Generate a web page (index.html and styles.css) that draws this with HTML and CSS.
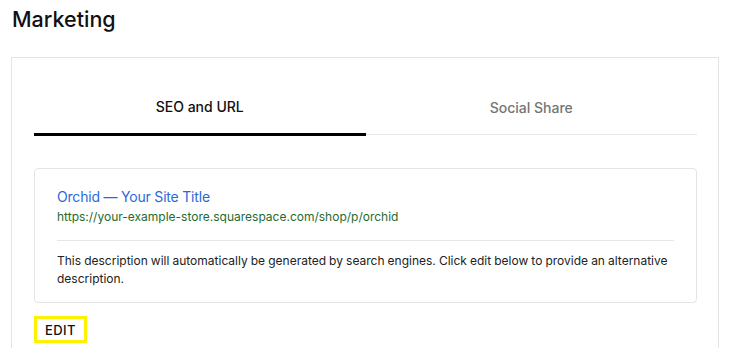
FILE: index.html
```html
<!DOCTYPE html>
<html lang="en">
<head>
    <meta charset="UTF-8">
    <title>Marketing</title>
    <link rel="stylesheet" href="styles.css">
</head>
<body>
    <h1 class="pageTitle">Marketing</h1>
    <div class="panel">
        <div class="tabs">
            <div class="tab active">SEO and URL</div>
            <div class="tab">Social Share</div>
        </div>

        <div class="preview">
            <p class="previewTitle">Orchid — Your Site Title</p>
            <p class="previewUrl">https://your-example-store.squarespace.com/shop/p/orchid</p>
            <hr class="divider">
            <p class="previewDesc">
                This description will automatically be generated by search engines. Click edit below to provide an alternative description.
            </p>
        </div>

        <button class="editButton" type="button">EDIT</button>
    </div>
</body>
</html>
```

FILE: styles.css
```css
body {
    margin: 0;
    font-family: Inter, "Noto Sans", sans-serif;
    color: #1d1d1d;
    background: #fff;
}
.pageTitle {
    margin: 0;
    padding: 6px 12px 0;
    font-size: 21.5px;
    line-height: 27px;
    font-weight: 500;
    color: #111;
}
.panel {
    margin: 24px 11px 0;
    border: 1px solid #e4e4e4;
    border-bottom: none;
    padding: 22px 21px 40px 22px;
    height: 400px;
}
.tabs {
    display: flex;
    align-items: flex-start;
}
.tab {
    flex: 1;
    text-align: center;
    font-size: 14px;
    line-height: 20px;
    font-weight: 500;
    color: #757575;
    padding: 17px 0 16px;
    border-bottom: 1px solid #e6e6e6;
}
.tab.active {
    color: #111;
    border-bottom: 3px solid #000;
}
.tab:not(.active) {
    margin-top: 1px;
}
.preview {
    margin-top: 32px;
    border: 1px solid #e4e4e4;
    border-radius: 4px;
    padding: 17px 22px 14px;
}
.previewTitle {
    margin: 0;
    font-size: 14px;
    letter-spacing: -0.2px;
    line-height: 21px;
    color: #2a6ad8;
}
.previewUrl {
    margin: 0;
    font-size: 12px;
    line-height: 20px;
    color: #1f6b2f;
}
.divider {
    border: none;
    border-top: 1px solid #e6e6e6;
    margin: 13px 0 11px;
}
.previewDesc {
    margin: 0;
    font-size: 12px;
    word-spacing: -0.3px;
    line-height: 18px;
    color: #222;
}
.editButton {
    display: block;
    margin-top: 13px;
    padding: 0 8px;
    height: 27px;
    border: 3px solid #fff200;
    background: #fff;
    font-family: Inter, "Noto Sans", sans-serif;
    font-size: 13px;
    font-weight: 500;
    letter-spacing: 0.4px;
    color: #111;
    cursor: pointer;
}
```
